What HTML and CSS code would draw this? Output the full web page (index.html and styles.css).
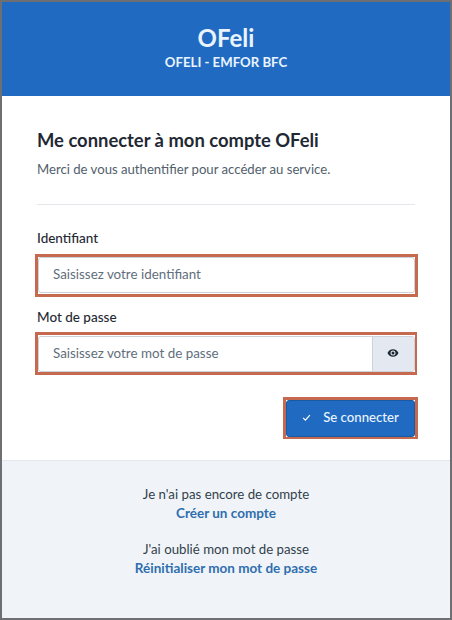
FILE: index.html
```html
<!DOCTYPE html>
<html lang="fr">
<head>
<meta charset="utf-8">
<title>OFeli</title>
<link rel="stylesheet" href="styles.css">
</head>
<body>
<main class="frame">
  <header class="banner">
    <div class="brand">OFeli</div>
    <div class="subbrand">OFELI - EMFOR BFC</div>
  </header>
  <section class="content">
    <h1 class="title">Me connecter à mon compte OFeli</h1>
    <p class="lead">Merci de vous authentifier pour accéder au service.</p>
    <hr class="rule">
    <div class="label label-first">Identifiant</div>
    <div class="mark mark-id">
      <div class="field"><span class="placeholder">Saisissez votre identifiant</span></div>
    </div>
    <div class="label label-second">Mot de passe</div>
    <div class="mark mark-pw">
      <div class="field">
        <span class="placeholder">Saisissez votre mot de passe</span>
        <span class="addon">
          <svg class="eye" viewBox="0 0 24 24" width="12" height="12" aria-hidden="true"><path fill="#1f2933" fill-rule="evenodd" d="M12 4.5C7 4.5 2.7 7.6 1 12c1.7 4.400 6 7.500 11 7.500s9.300-3.100 11-7.500c-1.700-4.400-6-7.500-11-7.500zM12 17a5 5 0 1 1 0-10 5 5 0 0 1 0 10zm0-8a3 3 0 1 0 0 6 3 3 0 0 0 0-6z"/></svg>
        </span>
      </div>
    </div>
    <div class="actions">
      <div class="mark mark-btn">
        <button class="submit" type="button">
          <svg class="check" viewBox="0 0 12 12" width="9" height="9" aria-hidden="true"><path fill="none" stroke="#fff" stroke-width="1.6" d="M1.500 6.500 4.500 9.500 10.500 2.800"/></svg>
          <span>Se connecter</span>
        </button>
      </div>
    </div>
  </section>
  <footer class="foot">
    <p class="foot-text">Je n'ai pas encore de compte</p>
    <a class="foot-link" href="#">Créer un compte</a>
    <p class="foot-text foot-gap">J'ai oublié mon mot de passe</p>
    <a class="foot-link" href="#">Réinitialiser mon mot de passe</a>
  </footer>
</main>
</body>
</html>
```
FILE: styles.css
```css
* { box-sizing: border-box; }
html, body { margin: 0; padding: 0; }
body {
  width: 452px;
  height: 620px;
  background: #fff;
  font-family: "Lato", "Open Sans", sans-serif;
  color: #1f2933;
}
.frame {
  width: 452px;
  height: 620px;
  display: flex;
  flex-direction: column;
  border: 2px solid #6d6f72;
}
.banner {
  height: 94px;
  background: #206bc1;
  color: #eaf4ff;
  text-align: center;
  padding-top: 21px;
}
.brand { font-size: 24px; line-height: 30px; font-weight: 700; }
.subbrand { margin-top: 1px; font-size: 13.200px; line-height: 16px; font-weight: 700; }
.content {
  height: 364px;
  padding: 32px 35px 0 35px;
  background: #fff;
}
.title { margin: 0; font-size: 18.400px; line-height: 24px; font-weight: 700; color: #1f2933; }
.lead { margin: 7px 0 0; font-size: 13.150px; line-height: 20px; color: #52606d; }
.rule { margin: 25px 0 0; border: 0; border-top: 1px solid #e4e7eb; }
.label { font-size: 13.500px; line-height: 18px; font-weight: 500; color: #1f2933; }
.label-first { margin-top: 24px; }
.label-second { margin-top: 11px; }
.mark { border: 3px solid #c5694f; background: #fff; }
.mark-id { margin: 7px -3px 0 -2px; height: 43px; padding: 0 0 1px; }
.mark-pw { margin: 6px -2px 0 -2px; height: 43px; padding: 1px 0 0; border-right-width: 2px; }
.field {
  height: 36px;
  display: flex;
  align-items: stretch;
  background: #fff;
  border: 1px solid #cbd2d9;
  border-radius: 3px;
  overflow: hidden;
}
.placeholder {
  flex: 1;
  padding-left: 14px;
  font-size: 13.400px;
  line-height: 32px;
  color: #616e7c;
}
.addon {
  width: 42px;
  display: flex;
  align-items: center;
  justify-content: center;
  padding: 0 2px 2px 0;
  background: #e4e9f1;
  border-left: 1px solid #cbd2d9;
}
.actions { display: flex; justify-content: flex-end; margin: 22px -3px 0 0; }
.mark-btn { width: 135px; height: 42px; border-bottom-width: 2px; }
.submit {
  width: 100%;
  height: 37px;
  display: flex;
  align-items: center;
  justify-content: center;
  gap: 12px;
  padding: 0 6px 3px;
  border: 1px solid #1a5aa5;
  border-radius: 3px;
  background: #206bc1;
  color: #eaf4ff;
  font: 500 13.200px "Lato", "Open Sans", sans-serif;
}
.foot {
  flex: 1;
  background: #f0f4f8;
  border-top: 1px solid #e4e7eb;
  text-align: center;
  padding-top: 24px;
}
.foot-text { margin: 0; font-size: 13.250px; line-height: 19px; color: #323f4b; }
.foot-gap { margin-top: 17px; }
.foot-link { display: block; font-size: 13.500px; line-height: 19px; font-weight: 700; color: #2f6eae; text-decoration: none; }
```
